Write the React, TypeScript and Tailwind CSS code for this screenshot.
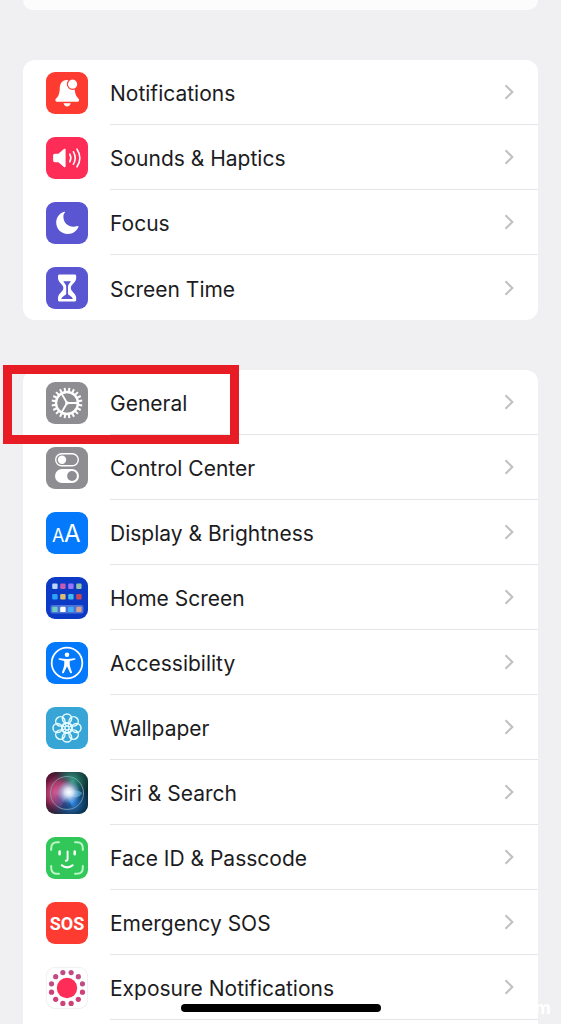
import type { ReactNode } from "react";

const polar = (cx: number, cy: number, r: number, deg: number) => ({
  x: cx + r * Math.cos((deg * Math.PI) / 180),
  y: cy + r * Math.sin((deg * Math.PI) / 180),
});

function Tile({ fill, children }: { fill: string; children: ReactNode }) {
  return (
    <svg viewBox="0 0 42 42" className="size-[42px] shrink-0" aria-hidden="true">
      <rect width="42" height="42" rx="9" fill={fill} />
      {children}
    </svg>
  );
}

function BellIcon() {
  return (
    <Tile fill="#fd3b30">
      <path
        d="M20.6 8c-4.6 0-6.6 3.8-6.8 7.8-.2 4.4-.6 7.600-3.200 10.200-1.100 1.100-1.300 1.700-1.200 2.600.1.7.6 1.100 1.400 1.100h20.900c.8 0 1.300-.5 1.400-1.100.1-.9-.2-1.500-1.200-2.600-2.500-2.500-3.100-5.800-3.300-10.200C28.400 11.600 25.200 8 20.600 8Z"
        fill="#fff"
      />
      <circle cx="26.600" cy="12.200" r="5.200" fill="#fff" stroke="#fd3b30" strokeWidth="1.200" />
      <path d="M17.500 31.200h7.200c-.4 2-1.800 3.200-3.600 3.200s-3.200-1.200-3.600-3.200Z" fill="#fff" />
    </Tile>
  );
}

function SpeakerIcon() {
  return (
    <Tile fill="#fd2d58">
      <path
        d="M9 16.800h3.400l5.500-4.800c.7-.6 1.700-.3 1.700.8v16.400c0 1.100-1 1.400-1.700.8l-5.500-4.800H9c-1.300 0-1.900-.7-1.900-1.900v-4.600c0-1.200.6-1.900 1.900-1.900Z"
        fill="#fff"
      />
      <g fill="none" stroke="#fff" strokeWidth="1.600" strokeLinecap="round">
        <path d="M23.800 17.200c1.300 2.400 1.300 5.200 0 7.600" />
        <path d="M27.400 14.800c2.300 3.900 2.300 8.500 0 12.400" />
        <path d="M31 12.200c3.600 5.500 3.600 12.100 0 17.600" />
      </g>
    </Tile>
  );
}

function MoonIcon() {
  return (
    <Tile fill="#5a55d1">
      <path
        d="M18.100 9.700C13.500 11.200 10.200 15.500 10.200 20.500c0 6.500 5.100 11.500 11.500 11.500 4.900 0 9-2.800 10.700-7 .3-.8-.3-1.300-1-1-6.900 2.700-14.100-2-14-9.200 0-1.500.3-2.900 1.500-4.300.4-.5 0-1-.8-.8Z"
        fill="#fff"
      />
    </Tile>
  );
}

function HourglassIcon() {
  return (
    <Tile fill="#5a55d1">
      <path
        d="M13.600 7.500h15c1 0 1.600.6 1.600 1.500v2c0 4.500-5.400 6.300-5.400 10s5.400 5.500 5.400 10v2c0 .9-.6 1.500-1.600 1.500h-15c-1 0-1.600-.6-1.600-1.500v-2c0-4.500 5.400-6.300 5.400-10S12 15.500 12 11V9c0-.9.600-1.500 1.600-1.500Z"
        fill="#fff"
      />
      <path
        d="M17.300 14.300h7.600c-.8 1.900-2.900 3.100-2.900 5.300v7.100c0 1.700 3.900 2.100 4.900 5.300H15.300c1-3.200 4.900-3.600 4.900-5.300v-7.100c0-2.200-2.100-3.400-2.900-5.300Z"
        fill="#5a55d1"
      />
    </Tile>
  );
}

function GearIcon() {
  const teeth = Array.from({ length: 20 }, (_, i) => i * 18 + 9);
  return (
    <Tile fill="#8e8e92">
      <g stroke="#fff" fill="none">
        {teeth.map((deg) => (
          <path key={deg} d="M31 21h5.400" strokeWidth="2" transform={`rotate(${deg} 21 21)`} />
        ))}
        <circle cx="21" cy="21" r="11" strokeWidth="2.400" />
        <path d="M21 21h11M21 21l-5.600-9.700M21 21l-5.600 9.700" strokeWidth="1.800" />
      </g>
      <circle cx="21" cy="21" r="1.800" fill="#fff" />
    </Tile>
  );
}

function TogglesIcon() {
  return (
    <Tile fill="#8e8e92">
      <rect x="9.700" y="6.700" width="22.600" height="12" rx="6" fill="none" stroke="#fff" strokeWidth="1.400" />
      <circle cx="16" cy="12.700" r="4.200" fill="#fff" />
      <rect x="9" y="22" width="24" height="14" rx="7" fill="#fff" />
      <circle cx="26" cy="29" r="4.900" fill="#8e8e92" />
    </Tile>
  );
}

function TextSizeIcon() {
  return (
    <Tile fill="#0479fb">
      <g fill="#fff" className="font-['Inter',sans-serif]">
        <text x="6" y="30" fontSize="18">A</text>
        <text x="18" y="30" fontSize="24">A</text>
      </g>
    </Tile>
  );
}

function HomeScreenIcon() {
  const rows = [
    { y: 6.500, colors: ["#bcd3fb", "#c65bb4", "#9a73fa", "#93c4a6"] },
    { y: 17, colors: ["#2aa2f8", "#d9bd70", "#3dbaf0", "#c94558"] },
    { y: 29.700, colors: ["#6ecbc2", "#ffffff", "#41aefb", "#d7a08c"] },
  ];
  return (
    <Tile fill="#0c3ac4">
      <rect x="4.500" y="28" width="33" height="8.500" rx="2" fill="#4a72d8" />
      {rows.map((row) =>
        row.colors.map((color, i) => (
          <rect key={color} x={6.200 + i * 8} y={row.y} width="5.400" height="5.400" rx="1.200" fill={color} />
        )),
      )}
    </Tile>
  );
}

function AccessibilityIcon() {
  return (
    <Tile fill="#0479fb">
      <circle cx="21" cy="21" r="15.300" fill="none" stroke="#fff" strokeWidth="1.800" />
      <circle cx="21" cy="12.700" r="2.300" fill="#fff" />
      <path
        d="M13.600 16.200c2.300.5 5 .7 7.400.7s5.100-.2 7.400-.7c1.300-.2 1.500 1.300.3 1.600l-4.900 1.200c-.3 2.700.1 5.200.9 7.500l1.200 3.500c.4 1.300-1.200 1.900-1.800.7L21 24.300l-3.100 6.400c-.6 1.200-2.200.6-1.800-.7l1.200-3.500c.8-2.300 1.200-4.800.9-7.500l-4.900-1.200c-1.200-.3-1-1.800.3-1.600Z"
        fill="#fff"
      />
    </Tile>
  );
}

function FlowerIcon() {
  const petals = Array.from({ length: 8 }, (_, i) => i * 45);
  return (
    <Tile fill="#37a5d6">
      <g fill="none" stroke="#e4fbff">
        {petals.map((deg) => (
          <circle key={deg} cx="21" cy="11.600" r="4.600" strokeWidth="1.500" transform={`rotate(${deg} 21 21)`} />
        ))}
        <circle cx="21" cy="21" r="5.200" strokeWidth="1.700" />
        {petals.map((deg) => (
          <path key={deg} d="M21 18.800v-3" strokeWidth="1.200" transform={`rotate(${deg + 22.500} 21 21)`} />
        ))}
        <circle cx="21" cy="21" r="2" strokeWidth="1.300" />
      </g>
    </Tile>
  );
}

function SiriIcon() {
  return (
    <Tile fill="url(#siri-base)">
      <defs>
        <linearGradient id="siri-base" x1="0" y1="0" x2="1" y2="0.300">
          <stop offset="0" stopColor="#5b0d2c" />
          <stop offset="0.500" stopColor="#2a2b3c" />
          <stop offset="1" stopColor="#05272b" />
        </linearGradient>
        <radialGradient id="siri-pink" cx="0.280" cy="0.500" r="0.460">
          <stop offset="0" stopColor="#e8649b" />
          <stop offset="0.550" stopColor="#c03c74" stopOpacity="0.800" />
          <stop offset="1" stopColor="#8e1a50" stopOpacity="0" />
        </radialGradient>
        <radialGradient id="siri-green" cx="0.620" cy="0.220" r="0.440">
          <stop offset="0" stopColor="#35a58a" />
          <stop offset="1" stopColor="#15765f" stopOpacity="0" />
        </radialGradient>
        <radialGradient id="siri-blue" cx="0.620" cy="0.720" r="0.500">
          <stop offset="0" stopColor="#3590ee" />
          <stop offset="1" stopColor="#0b3f8e" stopOpacity="0" />
        </radialGradient>
        <radialGradient id="siri-core" cx="0.540" cy="0.480" r="0.280">
          <stop offset="0" stopColor="#ffffff" />
          <stop offset="0.350" stopColor="#eaf4ff" stopOpacity="0.850" />
          <stop offset="1" stopColor="#9ad8ff" stopOpacity="0" />
        </radialGradient>
      </defs>
      <rect width="42" height="42" rx="9" fill="url(#siri-green)" />
      <rect width="42" height="42" rx="9" fill="url(#siri-pink)" />
      <rect width="42" height="42" rx="9" fill="url(#siri-blue)" />
      <path d="M21 24 15 35c3 1.500 8 1.500 11 0Z" fill="#0a2450" opacity="0.350" />
      <path d="M22 20c5-2.500 10-2.500 14.500 1-3 5-9 6-14.500 1Z" fill="#6fc8f5" opacity="0.500" />
      <rect width="42" height="42" rx="9" fill="url(#siri-core)" />
      <circle cx="21" cy="21" r="16.500" fill="none" stroke="#7fa3ae" strokeWidth="1" opacity="0.800" />
    </Tile>
  );
}

function FaceIcon() {
  return (
    <Tile fill="#31c759">
      <g fill="none" stroke="#fff" strokeLinecap="round">
        <g stroke="#b9f5c6" strokeWidth="2">
          <path d="M5.200 13V11c0-3.600 2.200-5.800 5.800-5.800h2" />
          <path d="M29 5.200h2c3.600 0 5.800 2.200 5.800 5.800v2" />
          <path d="M36.800 29v2c0 3.600-2.200 5.800-5.800 5.800h-2" />
          <path d="M13 36.800h-2c-3.600 0-5.800-2.200-5.800-5.800v-2" />
        </g>
        <path d="M13.600 14.500v2.800M28.700 14.500v2.800" strokeWidth="2.500" />
        <path d="M21.600 14.500v7.600c0 1.200-.5 1.700-1.800 1.700" strokeWidth="1.900" />
        <path d="M15.800 28.300c3 2.800 7.800 2.800 10.800 0" strokeWidth="2.100" />
      </g>
    </Tile>
  );
}

function SosIcon() {
  return (
    <Tile fill="#fd3b30">
      <text
        x="21"
        y="28"
        textAnchor="middle"
        fontSize="18"
        fill="#fff"
        className="font-['Roboto',sans-serif] font-bold"
      >
        SOS
      </text>
    </Tile>
  );
}

function ExposureIcon() {
  const dots = Array.from({ length: 12 }, (_, i) => polar(21, 21, 16, i * 30 + 15));
  return (
    <Tile fill="#ececee">
      <rect x="0.700" y="0.700" width="40.600" height="40.600" rx="8.300" fill="#fff" />
      <circle cx="21" cy="21" r="10.200" fill="#fd2d58" />
      {dots.map((dot, i) => (
        <circle key={i} cx={dot.x} cy={dot.y} r="2.600" fill={i >= 6 ? "#c04c83" : "#cf3f78"} />
      ))}
    </Tile>
  );
}

function Chevron() {
  return (
    <svg viewBox="0 0 10 16" className="h-4 w-[10px] shrink-0" aria-hidden="true">
      <path d="M1.500 1.200 8.300 8l-6.800 6.800" fill="none" stroke="#c2c2c4" strokeWidth="2.200" />
    </svg>
  );
}

type Item = { label: string; icon: ReactNode; marked?: boolean };

const alerts: Item[] = [
  { label: "Notifications", icon: <BellIcon /> },
  { label: "Sounds & Haptics", icon: <SpeakerIcon /> },
  { label: "Focus", icon: <MoonIcon /> },
  { label: "Screen Time", icon: <HourglassIcon /> },
];

const system: Item[] = [
  { label: "General", icon: <GearIcon />, marked: true },
  { label: "Control Center", icon: <TogglesIcon /> },
  { label: "Display & Brightness", icon: <TextSizeIcon /> },
  { label: "Home Screen", icon: <HomeScreenIcon /> },
  { label: "Accessibility", icon: <AccessibilityIcon /> },
  { label: "Wallpaper", icon: <FlowerIcon /> },
  { label: "Siri & Search", icon: <SiriIcon /> },
  { label: "Face ID & Passcode", icon: <FaceIcon /> },
  { label: "Emergency SOS", icon: <SosIcon /> },
  { label: "Exposure Notifications", icon: <ExposureIcon /> },
];

function Group({ items, open = false }: { items: Item[]; open?: boolean }) {
  return (
    <ul className={open ? "rounded-t-xl bg-white pb-3" : "rounded-xl bg-white"}>
      {items.map((item, i) => (
        <li key={item.label} className="relative">
          <a href="#" className="flex items-center gap-[22px] pl-[23px]">
            {item.icon}
            <span
              className={
                open || i < items.length - 1
                  ? "flex h-[65px] flex-1 items-center justify-between border-b border-[#e6e6e8] pr-6"
                  : "flex h-[65px] flex-1 items-center justify-between pr-6"
              }
            >
              <span className="pt-1">{item.label}</span>
              <Chevron />
            </span>
          </a>
          {item.marked && (
            <span className="pointer-events-none absolute -top-[5px] -left-5 z-10 h-[79px] w-[236px] border-9 border-[#e81c24]" />
          )}
        </li>
      ))}
    </ul>
  );
}

export default function App() {
  return (
    <div className="relative h-screen overflow-hidden bg-[#f0f0f3] font-['Inter',sans-serif] text-[21px] text-[#1c1c1e]">
      <main className="flex flex-col gap-[50px] px-[23px]">
        <div className="h-[10px] rounded-b-xl bg-[#fcfcfc]" />
        <Group items={alerts} />
        <Group items={system} open />
      </main>
      <span className="absolute right-[10px] bottom-[6px] text-lg leading-5 font-bold text-white">m</span>
      <div className="absolute bottom-3 left-1/2 h-2 w-[200px] -translate-x-1/2 rounded-full bg-black" />
    </div>
  );
}
